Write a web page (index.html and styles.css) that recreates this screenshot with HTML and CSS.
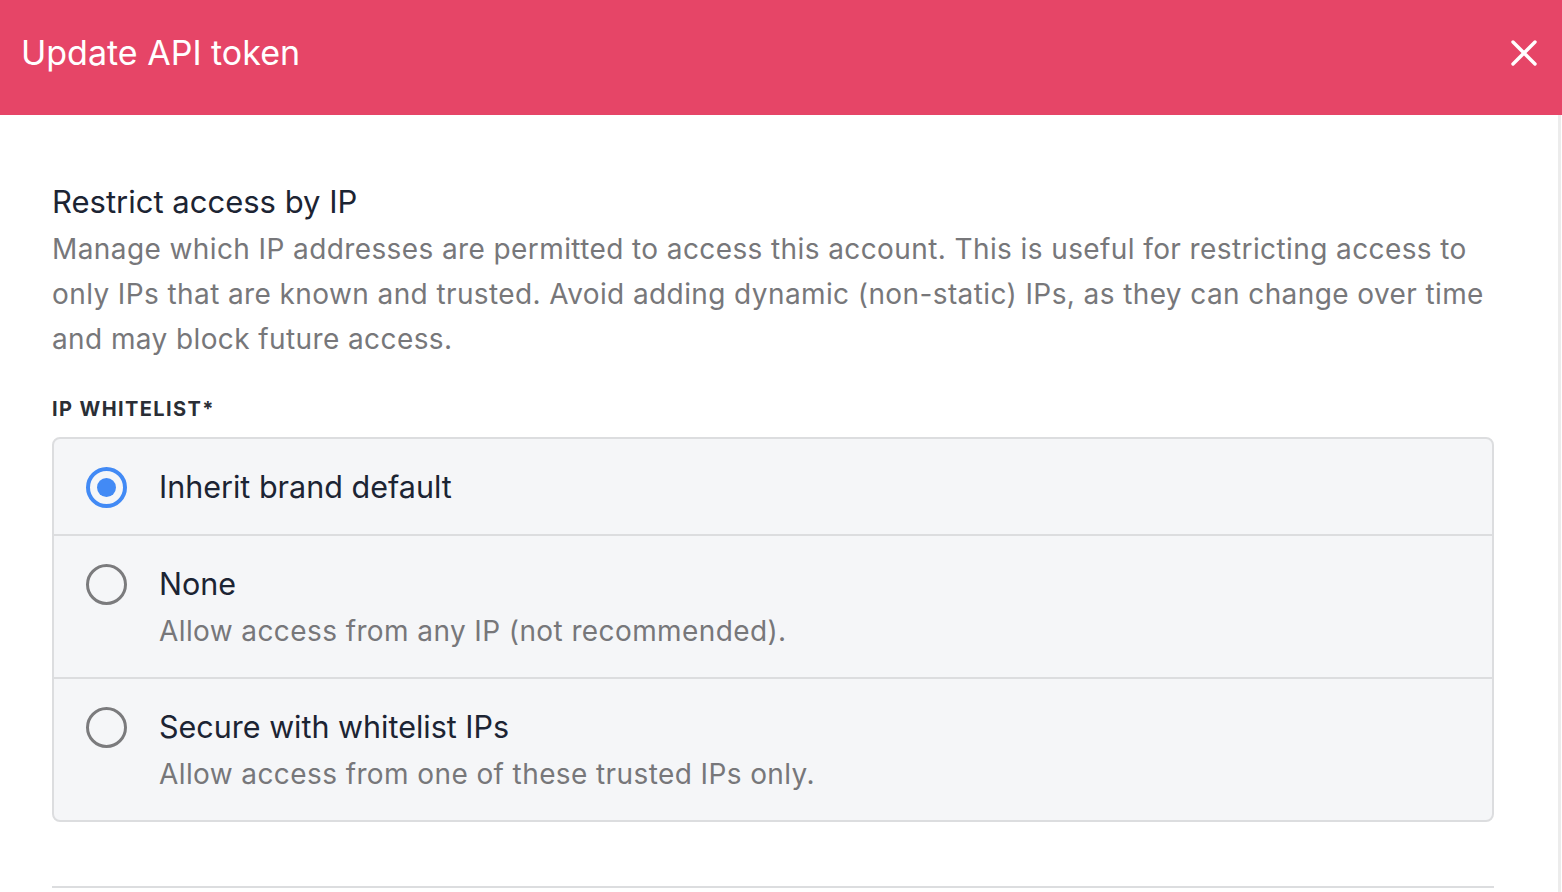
FILE: index.html
```html
<!DOCTYPE html>
<html lang="en">
<head>
  <meta charset="UTF-8" />
  <title>Update API token</title>
  <link rel="stylesheet" href="styles.css">
</head>
<body>
  <header class="modal-header">
    <h1>Update API token</h1>
    <button class="close-btn" aria-label="Close">
      <svg width="28" height="28" viewBox="0 0 28 28">
        <path d="M3 3 L25 25 M25 3 L3 25" stroke="#fff" stroke-width="3.4" stroke-linecap="round" />
      </svg>
    </button>
  </header>

  <main class="modal-body">
    <section class="ip-section">
      <h2>Restrict access by IP</h2>
      <p class="help">Manage which IP addresses are permitted to access this account. This is useful for restricting access to only IPs that are known and trusted. Avoid adding dynamic (non-static) IPs, as they can change over time and may block future access.</p>

      <label class="field-label">IP Whitelist*</label>
      <div class="options">
        <label class="option">
          <span class="radio checked"></span>
          <span class="option-text">
            <span class="option-title">Inherit brand default</span>
          </span>
        </label>
        <label class="option">
          <span class="radio"></span>
          <span class="option-text">
            <span class="option-title">None</span>
            <span class="option-desc">Allow access from any IP (not recommended).</span>
          </span>
        </label>
        <label class="option">
          <span class="radio"></span>
          <span class="option-text">
            <span class="option-title">Secure with whitelist IPs</span>
            <span class="option-desc">Allow access from one of these trusted IPs only.</span>
          </span>
        </label>
      </div>
    </section>
    <div class="divider"></div>
  </main>
</body>
</html>
```

FILE: styles.css
```css
* {
  margin: 0;
  box-sizing: border-box;
}
body {
  font-family: Inter, "Liberation Sans", sans-serif;
  background: #fff;
  overflow: hidden;
}
.modal-header {
  height: 115px;
  background-color: #e64567;
  color: #fff;
  display: flex;
  align-items: center;
  justify-content: space-between;
  padding: 0 24px 0 21px;
}
.modal-header h1 {
  font-weight: 400;
  font-size: 34px;
  margin-top: -10px;
}
.close-btn {
  background: none;
  border: none;
  padding: 0;
  margin-top: -9px;
  cursor: pointer;
  display: flex;
}
.modal-body {
  height: 777px;
  border-right: 3px solid #ececec;
  margin-right: 1px;
  padding: 67px 64px 0 52px;
}
.ip-section h2 {
  font-size: 31px;
  font-weight: 400;
  color: #1c2433;
  line-height: 40px;
}
.help {
  font-size: 28px;
  letter-spacing: 0.4px;
  line-height: 45px;
  color: #77777a;
  margin-top: 5px;
}
.field-label {
  display: block;
  margin-top: 33px;
  font-size: 20px;
  font-weight: 700;
  letter-spacing: 1.4px;
  text-transform: uppercase;
  color: #2a2e35;
  line-height: 28px;
}
.options {
  margin-top: 14px;
  border: 2px solid #dcdddf;
  border-radius: 8px;
  background: #f5f6f8;
}
.option {
  display: flex;
  align-items: flex-start;
  padding: 28px 32px;
  gap: 32px;
  border-top: 2px solid #dcdddf;
  cursor: pointer;
}
.option:first-child {
  border-top: none;
  padding-bottom: 26px;
}
.radio {
  width: 41px;
  height: 41px;
  border-radius: 50%;
  border: 3.5px solid #7b7b7d;
  flex-shrink: 0;
  display: flex;
  align-items: center;
  justify-content: center;
}
.radio.checked {
  border: 4px solid #428af5;
}
.radio.checked::after {
  content: "";
  width: 19px;
  height: 19px;
  border-radius: 50%;
  background: #428af5;
}
.option-text {
  display: flex;
  flex-direction: column;
}
.option-title {
  font-size: 30.5px;
  line-height: 40px;
  color: #1c2433;
}
.option-desc {
  font-size: 28px;
  letter-spacing: 0.4px;
  line-height: 44px;
  margin-top: 5px;
  margin-bottom: -4px;
  color: #77777a;
}
.divider {
  margin-top: 64px;
  border-top: 2px solid #dcdddf;
}
```
